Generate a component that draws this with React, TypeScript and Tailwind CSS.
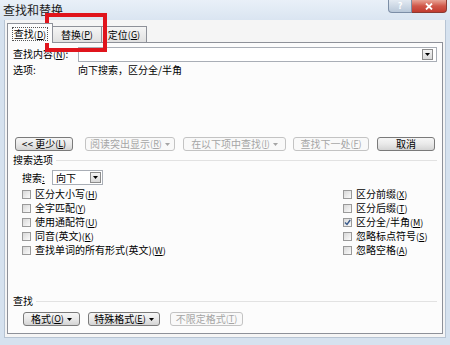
import React from "react";

const Key = ({ k }: { k: string }) => (
  <span className="text-[9px]">
    (<span className="underline">{k}</span>)
  </span>
);

const Arrow = ({ color = "#000" }: { color?: string }) => (
  <svg width="5" height="3" viewBox="0 0 5 3" className="ml-[3px]">
    <polygon points="0,0 5,0 2.5,3" fill={color} />
  </svg>
);

const DropBtn = () => (
  <span className="w-[11px] h-[11px] border border-[#8c8c8c] bg-linear-to-b from-[#f4f4f4] to-[#d9d9d9] flex items-center justify-center">
    <svg width="5" height="3" viewBox="0 0 5 3">
      <polygon points="0,0 5,0 2.5,3" fill="#000" />
    </svg>
  </span>
);

function Btn({
  children,
  disabled,
  className,
}: {
  children: React.ReactNode;
  disabled?: boolean;
  className?: string;
}) {
  return (
    <div
      className={
        "h-[14px] flex items-center justify-center rounded-[3px] border " +
        (disabled
          ? "border-[#c3c3c3] bg-[#f9f9f9] text-[#a5a5a5] "
          : "border-[#7a7a7a] bg-linear-to-b from-[#f6f6f6] via-[#e9e9e9] to-[#d4d4d4] text-black ") +
        (className || "")
      }
    >
      {children}
    </div>
  );
}

function Check({ label, checked }: { label: React.ReactNode; checked?: boolean }) {
  return (
    <div className="h-[14px] flex items-center">
      <span className="w-[9px] h-[9px] border border-[#9a9a9a] bg-linear-to-br from-[#d8d8d8] to-[#fbfbfb] flex items-center justify-center">
        {checked && (
          <svg width="7" height="7" viewBox="0 0 7 7">
            <path d="M1 3.5 L3 5.5 L6.2 1" stroke="#3a5b8c" strokeWidth="1.4" fill="none" />
          </svg>
        )}
      </span>
      <span className="ml-[4px]">{label}</span>
    </div>
  );
}

function Group({ title }: { title: string }) {
  return (
    <div className="h-[14px] flex items-center">
      <span className="mr-[3px]">{title}</span>
      <span className="flex-1 h-px bg-[#e2e2e2]" />
    </div>
  );
}

export default function App() {
  return (
    <div className="relative w-[450px] h-[345px] bg-[#d6e2ef] flex flex-col overflow-hidden font-['Noto_Sans_CJK_SC','Noto_Sans',sans-serif] text-[10px] leading-[14px] text-black">
      {/* title bar */}
      <div className="h-[20px] flex items-start justify-between bg-linear-to-b from-[#e9f0f8] to-[#dae5f1]">
        <div className="pl-[3px] pt-[2px] text-[12px] leading-[16px] text-[#1c1c1c]">查找和替换</div>
        <div className="flex mr-[3px]">
          <div className="w-[24px] h-[13px] rounded-bl-[4px] border border-t-0 border-[#7c8ea6] bg-linear-to-b from-[#e3eaf2] to-[#b9c8d9] flex items-center justify-center text-[9px] leading-[10px] font-bold text-white">
            ?
          </div>
          <div className="w-[35px] h-[13px] rounded-br-[4px] border border-t-0 border-l-0 border-[#8b3a32] bg-linear-to-b from-[#e7a396] via-[#d0574a] to-[#c23b2f] flex items-center justify-center">
            <svg width="8" height="7" viewBox="0 0 8 7">
              <path d="M1 0.5 L7 6.5 M7 0.5 L1 6.5" stroke="#fff" strokeWidth="1.8" />
            </svg>
          </div>
        </div>
      </div>

      {/* body */}
      <div className="flex-1 mx-[4px] mb-[7px] border-x border-b border-[#b7c4d3] bg-[#f5f5f5] px-[2px] pt-[3px] pb-[3px] flex flex-col">
        {/* tabs */}
        <div className="flex items-end h-[19px]">
          <div className="relative z-10 -mb-px w-[46px] h-[20px] border border-b-0 border-[#8e9199] bg-[#fcfcfc] flex items-center justify-center">
            <span className="border border-dotted border-[#555] px-[1px] leading-[11px]">
              查找<Key k="D" />
            </span>
          </div>
          <div className="w-[49px] h-[16px] border border-l-0 border-b-0 border-[#8e9199] bg-linear-to-b from-[#f5f5f5] to-[#e1e1e1] flex items-center justify-center">
            替换<Key k="P" />
          </div>
          <div className="w-[45px] h-[16px] border border-l-0 border-b-0 border-[#8e9199] bg-linear-to-b from-[#f5f5f5] to-[#e1e1e1] flex items-center justify-center">
            定位<Key k="G" />
          </div>
        </div>

        {/* panel */}
        <div className="flex-1 border border-[#8e9199] bg-[#fcfcfc] px-[5px] flex flex-col">
          <div className="mt-[4px] h-[15px] flex items-center">
            <span className="w-[65px]">
              查找内容<Key k="N" />:
            </span>
            <div className="flex-1 h-[15px] border border-[#a9aeb6] bg-white flex items-center justify-end pr-[3px]">
              <DropBtn />
            </div>
          </div>
          <div className="mt-[1px] h-[14px] flex items-center">
            <span className="w-[65px]">选项:</span>
            <span>向下搜索，区分全/半角</span>
          </div>

          <div className="mt-[60px] mx-[2px] flex items-center">
            <Btn className="w-[58px]">
              &lt;&lt; 更少<Key k="L" />
            </Btn>
            <Btn disabled className="w-[90px] ml-[12px]">
              阅读突出显示<Key k="R" />
              <Arrow color="#a5a5a5" />
            </Btn>
            <Btn disabled className="w-[103px] ml-[8px]">
              在以下项中查找<Key k="I" />
              <Arrow color="#a5a5a5" />
            </Btn>
            <Btn disabled className="w-[76px] ml-[7px]">
              查找下一处<Key k="F" />
            </Btn>
            <Btn className="w-[58px] ml-[8px]">取消</Btn>
          </div>

          <div className="mt-[2px]">
            <Group title="搜索选项" />
          </div>

          <div className="mt-[3px] pl-[9px] h-[15px] flex items-center">
            <span className="w-[30px]">
              搜索<span className="underline">:</span>
            </span>
            <div className="w-[51px] h-[15px] border border-[#a9aeb6] bg-white flex items-center justify-between pl-[3px] pr-[1px]">
              <span>向下</span>
              <DropBtn />
            </div>
          </div>

          <div className="mt-[2px] pl-[9px] flex justify-between">
            <div className="flex flex-col">
              <Check label={<>区分大小写<Key k="H" /></>} />
              <Check label={<>全字匹配<Key k="Y" /></>} />
              <Check label={<>使用通配符<Key k="U" /></>} />
              <Check label={<>同音(英文)<Key k="K" /></>} />
              <Check label={<>查找单词的所有形式(英文)<Key k="W" /></>} />
            </div>
            <div className="w-[94px] flex flex-col">
              <Check label={<>区分前缀<Key k="X" /></>} />
              <Check label={<>区分后缀<Key k="T" /></>} />
              <Check checked label={<>区分全/半角<Key k="M" /></>} />
              <Check label={<>忽略标点符号<Key k="S" /></>} />
              <Check label={<>忽略空格<Key k="A" /></>} />
            </div>
          </div>

          <div className="mt-[37px]">
            <Group title="查找" />
          </div>

          <div className="mt-[4px] pl-[10px] flex items-center">
            <Btn className="w-[57px]">
              格式<Key k="O" />
              <Arrow />
            </Btn>
            <Btn className="w-[72px] ml-[8px]">
              特殊格式<Key k="E" />
              <Arrow />
            </Btn>
            <Btn disabled className="w-[73px] ml-[10px]">
              不限定格式<Key k="T" />
            </Btn>
          </div>
        </div>
      </div>

      {/* red highlight around the 替换 tab */}
      <div className="absolute left-[45px] top-[13px] w-[62px] h-[39px] border-[4px] border-[#e0141c]" />
    </div>
  );
}
